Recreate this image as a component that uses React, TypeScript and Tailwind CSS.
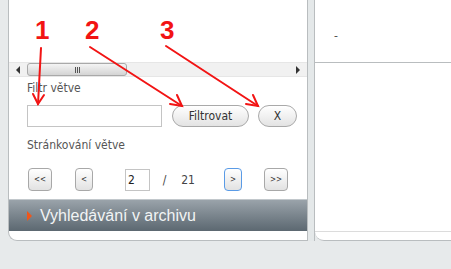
import React from "react";

const font = { fontFamily: '"DejaVu Sans Condensed", "DejaVu Sans", Tahoma, sans-serif', fontStretch: "semi-condensed" as const };

function PageBtn({ label, active, w }: { label: string; active?: boolean; w: string }) {
  return (
    <div
      className={`flex h-[23px] ${w} shrink-0 items-center justify-center rounded-[4px] border bg-gradient-to-b from-white to-[#e2e2e2] text-[8px] leading-none text-[#333] ${
        active ? "border-[#5a9be6]" : "border-[#a8a8a8]"
      }`}
    >
      {label}
    </div>
  );
}

function Annotations() {
  const num = { fontFamily: '"Liberation Sans", Arial, sans-serif' };
  return (
    <div className="pointer-events-none absolute inset-0">
      <span className="absolute left-[35px] top-[17px] text-[26px] font-bold leading-none text-[#f21414]" style={num}>
        1
      </span>
      <span className="absolute left-[85px] top-[17px] text-[26px] font-bold leading-none text-[#f21414]" style={num}>
        2
      </span>
      <span className="absolute left-[160px] top-[17px] text-[26px] font-bold leading-none text-[#f21414]" style={num}>
        3
      </span>
      <svg className="absolute inset-0" width="451" height="269" viewBox="0 0 451 269">
        <g stroke="#f21414" strokeWidth="2" fill="none" strokeLinecap="round">
          <path d="M41 48 L38 104" />
          <path d="M33 94 L38 104 L44 95" />
          <path d="M90 47 L182 106" />
          <path d="M170 104 L182 106 L177 95" />
          <path d="M166 46 L258 106" />
          <path d="M246 104 L258 106 L253 95" />
        </g>
      </svg>
    </div>
  );
}

export default function App() {
  return (
    <div className="relative flex h-[269px] w-[451px] overflow-hidden bg-[#e7eaeb]" style={font}>
      <div className="w-[8px] shrink-0" />

      {/* left panel */}
      <div className="flex h-[241px] w-[299px] shrink-0 flex-col rounded-bl-[9px] border-b border-l border-[#b9bdbf] bg-white">
        <div className="h-[62px]" />

        {/* horizontal scrollbar */}
        <div className="flex h-[15px] items-center border-y border-[#e6e6e6] bg-[#f1f1f1]">
          <div className="flex w-[18px] justify-center">
            <div className="h-0 w-0 border-y-[4px] border-r-[4px] border-y-transparent border-r-[#333]" />
          </div>
          <div className="flex h-[13px] w-[100px] items-center justify-center rounded-[3px] border border-[#a9a9a9] bg-gradient-to-b from-[#f4f4f4] to-[#d4d4d4]">
            <div className="flex gap-[1px]">
              <div className="h-[6px] w-[1px] bg-[#555]" />
              <div className="h-[6px] w-[1px] bg-[#555]" />
              <div className="h-[6px] w-[1px] bg-[#555]" />
            </div>
          </div>
          <div className="flex-1" />
          <div className="flex w-[18px] justify-center">
            <div className="h-0 w-0 border-y-[4px] border-l-[4px] border-y-transparent border-l-[#333]" />
          </div>
        </div>

        <div className="flex flex-col pl-[18px]">
          <div className="mt-[4px] h-[14px] text-[12px] leading-[14px] text-[#555]">Filtr větve</div>
          <div className="mt-[10px] flex items-center">
            <div className="h-[22px] w-[135px] shrink-0 border border-[#c4c4c4] bg-white" />
            <div className="ml-[10px] flex h-[22px] w-[77px] shrink-0 items-center justify-center rounded-full border border-[#a9a9a9] bg-gradient-to-b from-white to-[#e3e3e3] text-[12px] text-[#333]">
              Filtrovat
            </div>
            <div className="ml-[9px] flex h-[22px] w-[39px] shrink-0 items-center justify-center rounded-full border border-[#a9a9a9] bg-gradient-to-b from-white to-[#e3e3e3] text-[12px] text-[#333]">
              X
            </div>
          </div>
          <div className="mt-[11px] h-[14px] text-[12px] leading-[14px] text-[#555]">Stránkování větve</div>
          <div className="mt-[16px] flex h-[23px] items-center">
            <div className="ml-[1px]">
              <PageBtn label="<<" w="w-[24px]" />
            </div>
            <div className="ml-[23px]">
              <PageBtn label="<" w="w-[18px]" />
            </div>
            <div className="ml-[32px] flex h-[22px] w-[25px] shrink-0 items-center border border-[#c4c4c4] bg-white pl-[2px] text-[12px] text-[#222]">
              2
            </div>
            <div className="flex w-[29px] shrink-0 justify-center text-[12px] text-[#444]">/</div>
            <div className="flex w-[18px] shrink-0 justify-center text-[12px] text-[#444]">21</div>
            <div className="ml-[27px]">
              <PageBtn label=">" w="w-[18px]" active />
            </div>
            <div className="ml-[22px]">
              <PageBtn label=">>" w="w-[24px]" />
            </div>
          </div>
        </div>

        {/* section header */}
        <div className="mt-[8px] flex h-[32px] items-center border-t border-[#c2c8cc] bg-gradient-to-b from-[#9aa3aa] to-[#5c6871] pl-[18px]">
          <div className="h-0 w-0 border-y-[5px] border-l-[5px] border-y-transparent border-l-[#f0561a]" />
          <span
            className="ml-[8px] text-[16px] text-[#f2f4f5]"
            style={{ fontFamily: '"Liberation Sans", Arial, sans-serif', fontStretch: "normal" }}
          >
            Vyhledávání v archivu
          </span>
        </div>
        <div className="flex-1" />
      </div>

      {/* splitter */}
      <div className="h-[241px] w-[8px] shrink-0 border-x border-[#b9bdbf] bg-[#e4e8e9]" />

      {/* right panel */}
      <div className="flex h-[241px] flex-1 flex-col rounded-bl-[9px] border-b border-[#b9bdbf] bg-white">
        <div className="h-[62px] pl-[19px] pt-[29px] text-[12px] leading-[14px] text-[#555]">-</div>
        <div className="h-[1px] bg-[#b9bdbf]" />
        <div className="flex-1" />
        <div className="h-[1px] bg-[#dcdcdc]" />
        <div className="h-[8px]" />
      </div>

      <Annotations />
    </div>
  );
}
